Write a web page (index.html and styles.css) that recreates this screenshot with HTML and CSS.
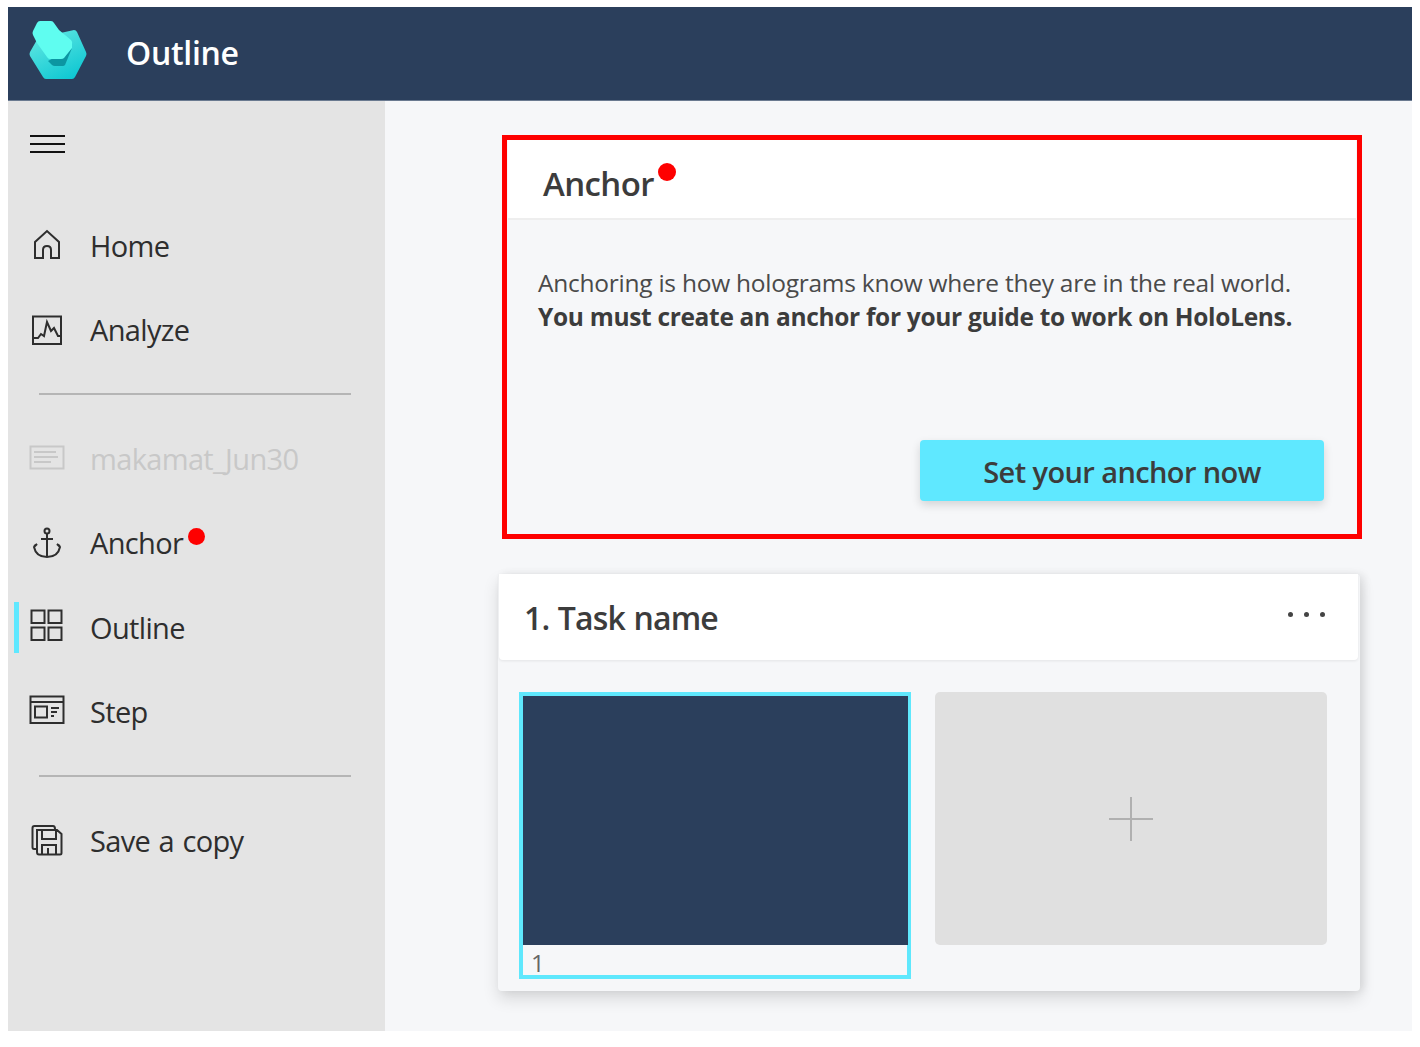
FILE: index.html
```html
<!DOCTYPE html>
<html lang="en">
<head>
<meta charset="utf-8">
<title>Outline</title>
<link rel="stylesheet" href="styles.css">
</head>
<body>
<div class="app">
  <header class="topbar">
    <svg class="logo" viewBox="0 0 60 60" width="60" height="60">
      <defs>
        <linearGradient id="lg" x1="0.2" y1="0" x2="0.8" y2="1"><stop offset="0" stop-color="#62e8e2"/><stop offset="1" stop-color="#0cc6d2"/></linearGradient>
      </defs>
      <path d="M10 18 L46 10 Q48 10 49 12 L58 32 Q59 34 58 36 L47 57 Q46 59 44 59 L18 59 Q16 59 15 57 L2 36 Q1 34 2 32 Z" fill="url(#lg)"/>
      <path d="M20 41 L44 28 L37 45 Q36 46 35 46 L27 46 Q25 46 24 45 Z" fill="#0c96a2"/>
      <path d="M9 3 Q10 1 12 1 L23 1 Q25 1 26 3 L31 10 L43 20 Q45 22 44 25 L44 28 L36 38 Q35 39 33 39 L22 39 Q20 39 19 37 L9 23 L5 15 Q4 13 5 11 Z" fill="#5ffdf0"/>
    </svg>
    <h1 class="apptitle">Outline</h1>
  </header>
  <div class="body">
    <nav class="sidebar">
      <div class="burger"><span></span><span></span><span></span></div>
      <ul class="navgroup first">
        <li class="navitem">
          <svg class="ico" viewBox="0 0 36 36"><path d="M6 31 V15 L18 4 L30 15 V31 H22 V23 Q22 19 18 19 Q14 19 14 23 V31 H6 Z"/></svg>
          <span>Home</span>
        </li>
        <li class="navitem">
          <svg class="ico" viewBox="0 0 36 36"><path d="M4 4.500 H32 V32 H4 Z M4 26 H9 L12 22 L15 24 L18 10 L22 19 L25 16 L29 24 H32"/></svg>
          <span>Analyze</span>
        </li>
      </ul>
      <hr class="rule">
      <ul class="navgroup">
        <li class="navitem disabled">
          <svg class="ico" viewBox="0 0 36 36"><path d="M1.500 6.500 H34.500 V28.500 H1.500 Z M5 12 H27 M5 17 H29 M5 22 H22"/></svg>
          <span>makamat_Jun30</span>
        </li>
        <li class="navitem">
          <svg class="ico" viewBox="0 0 36 36"><circle cx="18" cy="6" r="2.500"/><path d="M18 8.500 V32 M12 14 H24 M5 21 L8 19 L5 22 Q7 32 18 32 Q29 32 31 22 L28 19 L31 21"/></svg>
          <span class="withdot">Anchor<i class="dot"></i></span>
        </li>
        <li class="navitem active">
          <svg class="ico" viewBox="0 0 36 36"><path d="M2.500 1.500 H15.500 V14 H2.500 Z M19.500 1.500 H32.500 V14 H19.500 Z M2.500 18.500 H15.500 V31 H2.500 Z M19.500 18.500 H32.500 V31 H19.500 Z"/></svg>
          <span>Outline</span>
        </li>
        <li class="navitem">
          <svg class="ico" viewBox="0 0 36 36"><path d="M1.500 2.500 H34.500 V29 H1.500 Z M1.500 8 H34.500 M6 12.500 H18 V23.500 H6 Z M22 14 H30 M22 18 H28 M22 22 H25"/></svg>
          <span>Step</span>
        </li>
      </ul>
      <hr class="rule">
      <ul class="navgroup last">
        <li class="navitem">
          <svg class="ico" viewBox="0 0 36 36"><path d="M8 27 H5 Q3.500 27 3.500 25 V6 Q3.500 4 5.500 4 H24 Q26 4 26 7 M8 8 H28 L32.500 12 V31 Q32.500 32.500 31 32.500 H10 Q8 32.500 8 30 Z M13 8 V17 H27 V8 M13 32.500 V23 H27 V32.500 M19 26 V32.500"/></svg>
          <span class="spaced">Save a copy</span>
        </li>
      </ul>
    </nav>
    <main class="content">
      <section class="anchorbox">
        <div class="anchorhead"><h2 class="anchortitle">Anchor<i class="dot big"></i></h2></div>
        <div class="anchorbody">
          <p class="desc">Anchoring is how holograms know where they are in the real world.<br><strong>You must create an anchor for your guide to work on HoloLens.</strong></p>
          <button class="cta">Set your anchor now</button>
        </div>
      </section>
      <section class="task">
        <div class="taskhead">
          <h2 class="tasktitle">1. Task name</h2>
          <div class="more"><span></span><span></span><span></span></div>
        </div>
        <div class="tasksteps">
          <div class="thumb">
            <div class="preview"></div>
            <div class="num">1</div>
          </div>
          <div class="addstep">
            <svg viewBox="0 0 44 44" width="44" height="44"><path d="M22 0 V44 M0 22 H44" stroke="#b0b0b0" stroke-width="2" fill="none"/></svg>
          </div>
        </div>
      </section>
    </main>
  </div>
</div>
</body>
</html>
```
FILE: styles.css
```css
* { box-sizing: border-box; }
html, body { margin: 0; padding: 0; background: #fff; }
body { padding: 7px 8px 16px; font-family: "Open Sans", "Noto Sans", sans-serif; color: #3c3c3c; }
.app { width: 1404px; height: 1024px; display: flex; flex-direction: column; }
.topbar { height: 94px; background: #2b3f5c; display: flex; align-items: center; padding-left: 20px; border-bottom: 1px solid #6a7a90; }
.logo { flex: none; margin-top: -7px; }
.apptitle { margin: -2px 0 0 38px; font-size: 32px; font-weight: 600; color: #fff; letter-spacing: -0.3px; }
.body { flex: 1; display: flex; min-height: 0; }
.sidebar { width: 377px; background: #e4e4e4; flex: none; display: flex; flex-direction: column; }
.burger { margin: 34px 0 0 22px; width: 35px; display: flex; flex-direction: column; gap: 6px; }
.burger span { display: block; height: 2px; background: #111; }
ul.navgroup { list-style: none; margin: 0; padding: 0; display: flex; flex-direction: column; }
ul.navgroup.first { margin-top: 50px; gap: 0; }
.navitem { height: 84.500px; display: flex; align-items: center; padding-left: 21px; font-size: 29px; letter-spacing: -0.65px; color: #2e2e2e; position: relative; }
.navitem span { margin-left: 25px; }
.navitem .spaced { word-spacing: 1.5px; }
.ico { width: 36px; height: 36px; flex: none; fill: none; stroke: #2e2e2e; stroke-width: 2; }
.navitem.disabled { color: #c8c8c8; }
.navitem.disabled .ico { stroke: #c8c8c8; }
.navitem.active::before { content: ""; position: absolute; left: 6px; top: 17px; width: 5px; height: 51px; background: #5fe8ff; }
.withdot { position: relative; }
.dot { position: absolute; left: 100%; top: 5px; margin-left: 5px; width: 17px; height: 17px; border-radius: 50%; background: #fe0000; }
.rule { margin: 21px 34px 0 31px; border: 0; height: 2px; background: #b5b5b5; }
.rule + ul { margin-top: 21px; }
.navgroup.last { margin-top: 21px; }
.content { flex: 1; background: #f6f7f9; padding: 34px 50px 0 117px; display: flex; flex-direction: column; }
.anchorbox { width: 860px; height: 404px; flex: none; border: 5px solid #fe0000; display: flex; flex-direction: column; }
.anchorhead { height: 80px; background: #fff; border-bottom: 2px solid #eeeeee; padding-left: 35px; margin: 0 1px; display: flex; align-items: center; }
.anchortitle { margin: 8px 0 0; font-size: 33px; font-weight: 600; color: #3c3c3c; position: relative; letter-spacing: -0.6px; line-height: 1; }
.dot.big { top: -4px; margin-left: 4px; width: 18px; height: 18px; }
.anchorbody { flex: 1; display: flex; flex-direction: column; padding: 46px 33px 33px 31px; }
.desc { margin: 0; font-size: 24.500px; line-height: 34px; color: #4a4a4a; letter-spacing: -0.25px; white-space: nowrap; }
.desc strong { color: #3c3c3c; font-weight: 700; letter-spacing: -0.32px; }
.cta { margin-top: auto; align-self: flex-end; width: 404px; height: 61px; padding: 2px 0 0; background: #5fe8ff; border: 0; border-radius: 4px; font: 600 29px "Open Sans", "Noto Sans", sans-serif; color: #3c3c3c; letter-spacing: -0.6px; box-shadow: 0 4px 10px rgba(0,0,0,.14); }
.task { margin: 35px 0 0 -4px; width: 862px; height: 417px; flex: none; border-radius: 4px; background: #f6f7f9; box-shadow: 0 8px 16px rgba(0,0,0,.12), 4px 0 8px rgba(0,0,0,.08); padding: 0 2px 0 1px; display: flex; flex-direction: column; }
.taskhead { height: 86px; flex: none; background: #fff; border-radius: 0 0 4px 4px; box-shadow: 0 1px 3px rgba(0,0,0,.08); display: flex; align-items: center; justify-content: space-between; padding: 2px 33px 0 25px; }
.tasktitle { margin: 0; font-size: 32px; font-weight: 600; color: #3c3c3c; letter-spacing: -0.85px; word-spacing: 1px; line-height: 1; }
.more { display: flex; gap: 11px; margin-top: -7px; }
.more span { width: 5px; height: 5px; border-radius: 50%; background: #444; }
.tasksteps { display: flex; gap: 24px; padding: 32px 0 0 20px; align-items: flex-start; }
.thumb { width: 392px; height: 287px; flex: none; border: 4px solid #5fe8fd; display: flex; flex-direction: column; }
.preview { height: 249px; flex: none; background: #2b3f5c; margin-right: -1px; }
.num { font-size: 24px; line-height: 36px; height: 30px; padding-left: 8px; color: #666; }
.addstep { width: 392px; height: 253px; flex: none; background: #e0e0e0; border-radius: 5px; display: flex; align-items: center; justify-content: center; }
```
